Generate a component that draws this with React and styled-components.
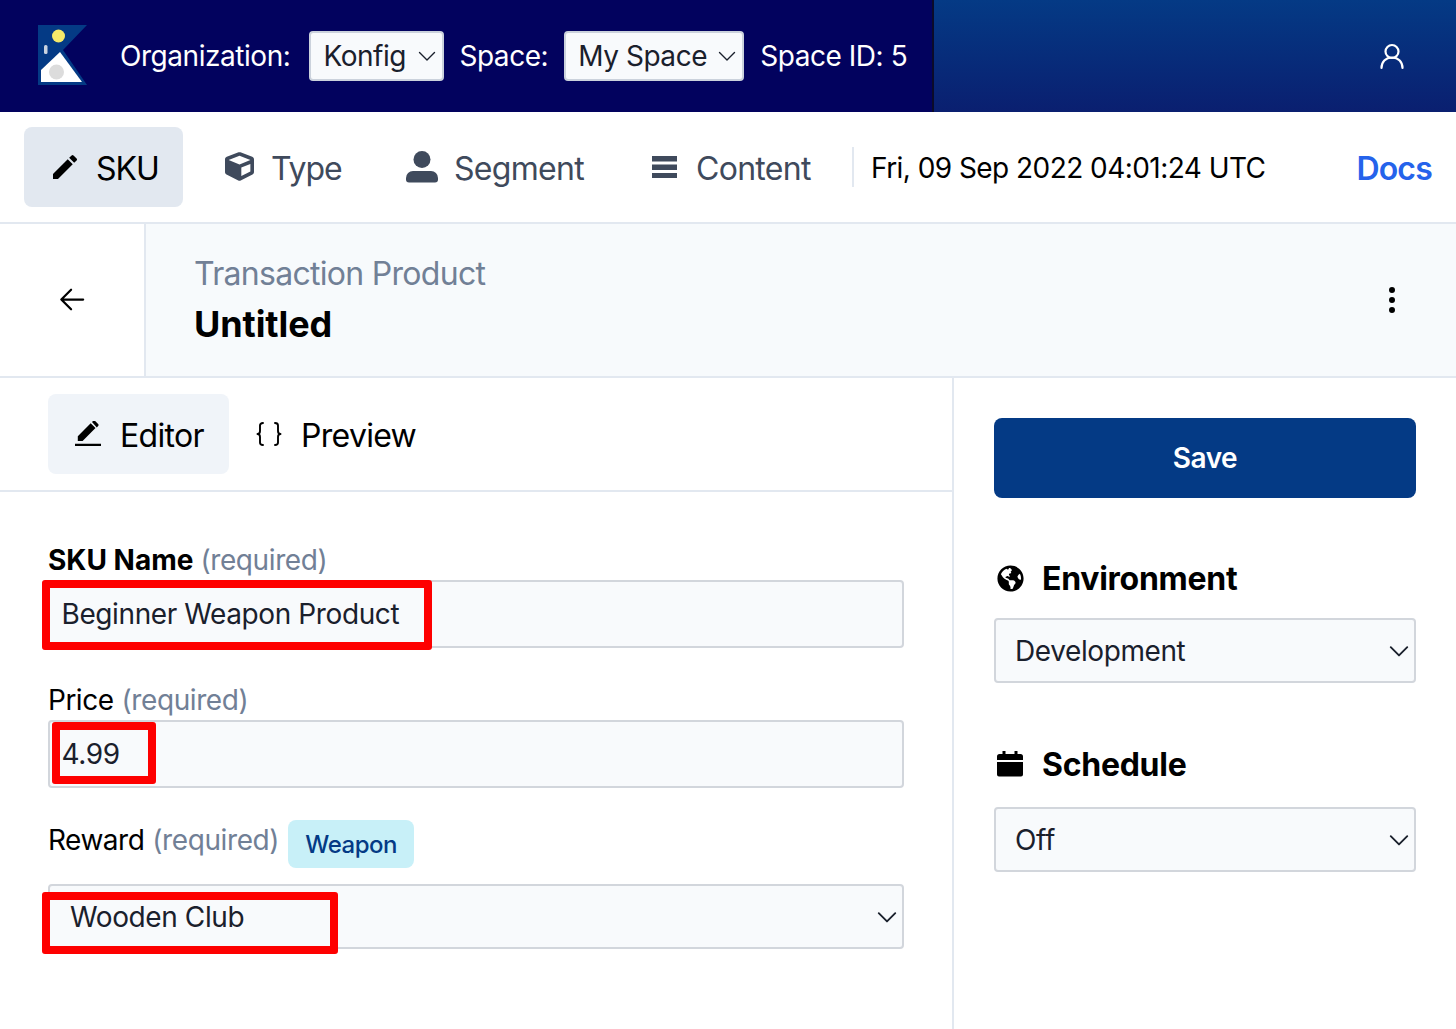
import React from "react";
import styled, { createGlobalStyle } from "styled-components";
import { FaCube, FaGlobeAmericas } from "react-icons/fa";
import { MdEdit } from "react-icons/md";
import { BsThreeDotsVertical } from "react-icons/bs";

const GlobalStyle = createGlobalStyle`
  * { box-sizing: border-box; }
  html, body { margin: 0; padding: 0; background: #fff; }
  body { font-family: Inter, "Liberation Sans", sans-serif; color: #000; overflow: hidden; letter-spacing: -0.35px; }
`;

const Page = styled.div`
  width: 1456px;
  height: 1029px;
  display: flex;
  flex-direction: column;
  overflow: hidden;
`;

const TopBar = styled.header`
  height: 112px;
  display: flex;
  flex: none;
`;
const OrgBar = styled.div`
  width: 934px;
  background: #02025e;
  border-right: 2px solid #0b0b2a;
  display: flex;
  align-items: center;
  padding-left: 38px;
  color: #fff;
  font-size: 28px;
  letter-spacing: -0.45px;
  white-space: nowrap;
`;
const UserBar = styled.div`
  flex: 1;
  background: linear-gradient(180deg, #043a85, #0a1f70);
  display: flex;
  align-items: center;
  justify-content: flex-end;
  padding-right: 50px;
  color: #fff;
`;
const Logo = styled.svg`
  width: 50px;
  height: 60px;
  margin-right: 32px;
  margin-bottom: 2px;
`;
const TopLabel = styled.span`
  margin-right: ${(p) => p.$gap}px;
`;
const TopSelect = styled.div`
  height: 50px;
  padding: 0 5px 0 12px;
  margin-right: ${(p) => p.$mr}px;
  display: flex;
  align-items: center;
  background: #f8fafc;
  border: 2px solid #cbd2dc;
  border-radius: 4px;
  color: #1a202c;
  width: ${(p) => p.$w}px;
  justify-content: space-between;
`;

const Nav = styled.nav`
  height: 112px;
  flex: none;
  display: flex;
  align-items: center;
  padding: 15px 24px 16px;
  border-bottom: 2px solid #e2e8f0;
`;
const NavTab = styled.div`
  height: 80px;
  width: ${(p) => p.$w}px;
  margin-right: ${(p) => p.$mr}px;
  display: flex;
  align-items: center;
  gap: ${(p) => p.$gap}px;
  padding-left: ${(p) => p.$pl}px;
  border-radius: 8px;
  font-size: 32px;
  letter-spacing: ${(p) => p.$ls || -0.7}px;
  color: ${(p) => (p.$active ? "#000" : "#3f4a5c")};
  background: ${(p) => (p.$active ? "#e2e8f0" : "transparent")};
`;
const NavLabel = styled.span`
  padding-top: 3px;
`;
const Divider = styled.div`
  width: 2px;
  height: 40px;
  background: #e2e8f0;
  margin-right: 17px;
`;
const DateText = styled.div`
  font-size: 28px;
  letter-spacing: -0.55px;
  padding-top: 2px;
  flex: 1;
`;
const Docs = styled.a`
  font-size: 32px;
  font-weight: 600;
  letter-spacing: -0.8px;
  padding-top: 3px;
  color: #2563eb;
`;

const SubHeader = styled.div`
  height: 154px;
  flex: none;
  display: flex;
  border-bottom: 2px solid #e2e8f0;
`;
const BackCell = styled.div`
  width: 146px;
  border-right: 2px solid #e2e8f0;
  display: flex;
  align-items: center;
  padding-left: 59px;
`;
const TitleCell = styled.div`
  flex: 1;
  background: #f7fafc;
  display: flex;
  align-items: center;
  justify-content: space-between;
  padding: 0 48px;
`;
const TitleBlock = styled.div`
  padding-top: 2px;
`;
const Kicker = styled.div`
  font-size: 32px;
  line-height: 40px;
  letter-spacing: -0.7px;
  color: #718096;
`;
const Title = styled.div`
  font-size: 36px;
  line-height: 48px;
  font-weight: 700;
  letter-spacing: -0.1px;
  margin-top: 6px;
`;

const Main = styled.div`
  flex: 1;
  display: flex;
`;
const EditorPane = styled.section`
  width: 954px;
  border-right: 2px solid #e2e8f0;
`;
const EditorTabs = styled.div`
  height: 114px;
  padding: 16px 48px;
  display: flex;
  border-bottom: 2px solid #e2e8f0;
`;
const EditorTab = styled.div`
  height: 80px;
  width: ${(p) => p.$w}px;
  padding-left: ${(p) => p.$pl}px;
  display: flex;
  align-items: center;
  gap: ${(p) => p.$gap}px;
  border-radius: 8px;
  font-size: 32px;
  letter-spacing: -0.7px;
  background: ${(p) => (p.$active ? "#f0f4f9" : "transparent")};
`;
const Form = styled.div`
  padding: 0 48px;
`;
const FieldLabel = styled.label`
  height: ${(p) => p.$h}px;
  padding-bottom: ${(p) => p.$pb}px;
  display: flex;
  align-items: center;
  gap: ${(p) => p.$gap}px;
  font-size: 28px;
  font-weight: ${(p) => (p.$bold ? 700 : 400)};
  letter-spacing: ${(p) => (p.$bold ? "0" : "-0.5px")};
  margin-top: ${(p) => p.$mt}px;
  white-space: nowrap;
`;
const Hint = styled.span`
  color: #718096;
  font-weight: 400;
  letter-spacing: -0.4px;
`;
const Badge = styled.span`
  height: 48px;
  width: 126px;
  margin-left: 1px;
  margin-bottom: -8px;
  flex: none;
  display: flex;
  align-items: center;
  justify-content: center;
  border-radius: 8px;
  background: #c8f0f8;
  color: #043a85;
  font-size: 24px;
  font-weight: 500;
`;
const FieldBox = styled.div`
  position: relative;
  width: 856px;
  height: ${(p) => p.$h}px;
  margin-top: ${(p) => p.$mt || 0}px;
`;
const TextInput = styled.input`
  width: 100%;
  height: 100%;
  padding: 0 11.5px;
  font: inherit;
  font-size: 28px;
  letter-spacing: -0.4px;
  color: #1a202c;
  background: #f8fafc;
  border: 2px solid #d2d6dc;
  border-radius: 4px;
  outline: none;
`;
const SelectBox = styled.div`
  height: ${(p) => p.$h}px;
  width: 100%;
  padding: 0 4px 0 ${(p) => p.$pl}px;
  display: flex;
  align-items: center;
  justify-content: space-between;
  font-size: 28px;
  letter-spacing: -0.4px;
  color: #1a202c;
  background: #f8fafc;
  border: 2px solid #d2d6dc;
  border-radius: 4px;
`;
const Highlight = styled.div`
  position: absolute;
  left: ${(p) => p.$l}px;
  top: ${(p) => p.$t}px;
  width: ${(p) => p.$w}px;
  height: ${(p) => p.$h}px;
  border: 8px solid #fe0000;
  border-radius: 3px;
  pointer-events: none;
`;

const SidePane = styled.aside`
  flex: 1;
  padding: 40px 40px 0;
`;
const SaveButton = styled.button`
  width: 100%;
  height: 80px;
  padding-top: 1px;
  border: none;
  border-radius: 8px;
  background: #043a85;
  color: #fff;
  font: inherit;
  font-size: 28px;
  font-weight: 600;
  letter-spacing: -0.5px;
`;
const SideHeading = styled.div`
  display: flex;
  align-items: center;
  gap: ${(p) => p.$gap}px;
  height: 40px;
  padding-left: 3px;
  font-size: 32px;
  font-weight: 700;
  letter-spacing: -0.27px;
  margin-top: ${(p) => p.$mt}px;
  margin-bottom: ${(p) => p.$mb}px;
`;

const Chevron = ({ size = 22, weight = 1.7 }) => (
  <svg width={size} height={size} viewBox="0 0 20 20" fill="none" stroke="#1a202c" strokeWidth={weight} strokeLinecap="round" strokeLinejoin="round">
    <path d="M2.500 6.500 10 14l7.500-7.500" />
  </svg>
);

const KonfigLogo = () => (
  <Logo viewBox="0 0 50 60">
    <path fill="#043a85" d="M0 0h49L25 25l24 35H0z" />
    <path fill="#fff" d="M22 27 3 45v12h41z" />
    <circle cx="18.500" cy="47" r="7.500" fill="#dcdcdc" />
    <circle cx="20.500" cy="11" r="6.500" fill="#f5ea6a" />
    <rect x="6" y="20" width="3.500" height="9" rx="1.500" fill="#c9d3e0" />
  </Logo>
);

const UserOutline = () => (
  <svg width="28" height="28" viewBox="0 0 28 28" fill="none" stroke="#fff" strokeWidth="2.200" strokeLinecap="round">
    <circle cx="14" cy="9.500" r="6.500" />
    <path d="M3.500 26c0-6 4-10.500 10.500-10.500S24.500 20 24.500 26" />
  </svg>
);

const SegmentIcon = () => (
  <svg width="32" height="32" viewBox="0 0 32 32" fill="#3f4a5c">
    <circle cx="16" cy="8.500" r="8.500" />
    <path d="M7 20h18a7 7 0 0 1 7 7v1.500a3 3 0 0 1-3 3H3a3 3 0 0 1-3-3V27a7 7 0 0 1 7-7z" />
  </svg>
);

const BarsIcon = () => (
  <svg width="25" height="22" viewBox="0 0 25 22" fill="#3f4a5c">
    <rect y="0" width="25" height="5.500" />
    <rect y="8.500" width="25" height="5.500" />
    <rect y="17" width="25" height="5.500" />
  </svg>
);

const BackArrow = () => (
  <svg width="26" height="26" viewBox="0 0 28 28" fill="none" stroke="#000" strokeWidth="2.400" strokeLinecap="round" strokeLinejoin="round">
    <path d="M13 3 2.500 13.500 13 24M3 13.500h23" />
  </svg>
);

const PenLineIcon = () => (
  <svg width="26" height="26" viewBox="0 0 26 26" fill="#000">
    <path d="M0 22.800h26V25H0zM2.800 20v-4.800L15.700 2.300l4.800 4.800L7.600 20zM17 1 18 0a1.500 1.500 0 0 1 2.100 0l3 3a1.500 1.500 0 0 1 0 2.100l-1.300 1.300z" />
  </svg>
);

const BracesIcon = () => (
  <svg width="26" height="26" viewBox="0 0 26 26" fill="none" stroke="#000" strokeWidth="1.900" strokeLinecap="round" strokeLinejoin="round">
    <path d="M7 2c-2 0-3 .8-3 2.500v5.500c0 1.800-.9 3-2.500 3 1.600 0 2.500 1.200 2.500 3v5.500C4 23.200 5 24 7 24" />
    <path d="M19 2c2 0 3 .8 3 2.500v5.500c0 1.800.9 3 2.500 3-1.600 0-2.500 1.200-2.500 3v5.500c0 1.700-1 2.500-3 2.500" />
  </svg>
);

const CalendarIcon = () => (
  <svg width="26" height="26" viewBox="0 0 26 26" fill="#000">
    <path d="M5.500 0h3v3h9V0h3v3h3A2.500 2.500 0 0 1 26 5.500V9H0V5.500A2.500 2.500 0 0 1 2.500 3h3zM0 11h26v12.500a2 2 0 0 1-2 2H2a2 2 0 0 1-2-2z" />
  </svg>
);

export default function App() {
  return (
    <Page>
      <GlobalStyle />
      <TopBar>
        <OrgBar>
          <KonfigLogo />
          <TopLabel $gap={19}>Organization:</TopLabel>
          <TopSelect $w={135} $mr={15}>Konfig<Chevron size={20} weight={1.4} /></TopSelect>
          <TopLabel $gap={16}>Space:</TopLabel>
          <TopSelect $w={180} $mr={16}>My Space<Chevron size={20} weight={1.4} /></TopSelect>
          <span>Space ID: 5</span>
        </OrgBar>
        <UserBar><UserOutline /></UserBar>
      </TopBar>

      <Nav>
        <NavTab $active $w={159} $mr={18} $pl={25} $gap={15} $ls={-1}><MdEdit size={32} color="#000" /><NavLabel>SKU</NavLabel></NavTab>
        <NavTab $w={164} $mr={17} $pl={24} $gap={17} $ls={-1.1}><FaCube size={29} /><NavLabel>Type</NavLabel></NavTab>
        <NavTab $w={225} $mr={21} $pl={24} $gap={16}><SegmentIcon /><NavLabel>Segment</NavLabel></NavTab>
        <NavTab $w={224} $mr={0} $pl={24} $gap={19}><BarsIcon /><NavLabel>Content</NavLabel></NavTab>
        <Divider />
        <DateText>Fri, 09 Sep 2022 04:01:24 UTC</DateText>
        <Docs>Docs</Docs>
      </Nav>

      <SubHeader>
        <BackCell><BackArrow /></BackCell>
        <TitleCell>
          <TitleBlock>
            <Kicker>Transaction Product</Kicker>
            <Title>Untitled</Title>
          </TitleBlock>
          <BsThreeDotsVertical size={32} color="#000" />
        </TitleCell>
      </SubHeader>

      <Main>
        <EditorPane>
          <EditorTabs>
            <EditorTab $active $w={181} $pl={27} $gap={19}><PenLineIcon /><NavLabel>Editor</NavLabel></EditorTab>
            <EditorTab $w={220} $pl={27} $gap={19}><BracesIcon /><NavLabel>Preview</NavLabel></EditorTab>
          </EditorTabs>
          <Form>
            <FieldLabel $bold $h={37} $pb={3} $mt={51} $gap={7}>SKU Name <Hint>(required)</Hint></FieldLabel>
            <FieldBox $h={68}>
              <TextInput readOnly value="Beginner Weapon Product" />
              <Highlight $l={-6} $t={0} $w={390} $h={70} />
            </FieldBox>
            <FieldLabel $h={38} $pb={2} $mt={34} $gap={8}>Price <Hint>(required)</Hint></FieldLabel>
            <FieldBox $h={68}>
              <TextInput readOnly value="4.99" />
              <Highlight $l={4} $t={2} $w={104} $h={62} />
            </FieldBox>
            <FieldLabel $h={48} $pb={8} $mt={32} $gap={8}>Reward <Hint>(required)</Hint><Badge>Weapon</Badge></FieldLabel>
            <FieldBox $h={65} $mt={16}>
              <SelectBox $h={65} $pl={20}>Wooden Club<Chevron /></SelectBox>
              <Highlight $l={-6} $t={8} $w={296} $h={62} />
            </FieldBox>
          </Form>
        </EditorPane>

        <SidePane>
          <SaveButton>Save</SaveButton>
          <SideHeading $mt={60} $mb={20} $gap={18}><FaGlobeAmericas size={27} />Environment</SideHeading>
          <SelectBox $h={65} $pl={19}>Development<Chevron /></SelectBox>
          <SideHeading $mt={61} $mb={23} $gap={19}><CalendarIcon />Schedule</SideHeading>
          <SelectBox $h={65} $pl={19}>Off<Chevron /></SelectBox>
        </SidePane>
      </Main>
    </Page>
  );
}
